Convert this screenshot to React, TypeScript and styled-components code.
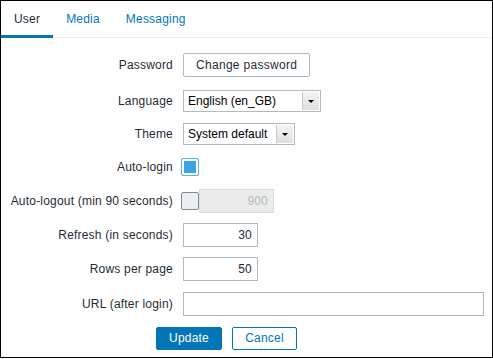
import React from "react";
import styled, { createGlobalStyle } from "styled-components";

const Global = createGlobalStyle`
  html, body { margin: 0; padding: 0; background: #fff; }
  body { font-family: "Liberation Sans", Arial, sans-serif; font-size: 12px; color: #1f2c33; letter-spacing: 0.2px; }
  * { box-sizing: border-box; }
`;

const Frame = styled.div`
  width: 493px;
  height: 358px;
  border: 1px solid #000;
  background: #fff;
  display: flex;
  flex-direction: column;
`;

const TabList = styled.div`
  display: flex;
  height: 37px;
  border-bottom: 1px solid #ebeef0;
`;

const Tab = styled.div<{ $active?: boolean }>`
  height: 37px;
  margin-bottom: -1px;
  padding: 1px 13px 0;
  display: flex;
  align-items: center;
  border-bottom: 3px solid ${(p) => (p.$active ? "#0275b8" : "transparent")};
  color: ${(p) => (p.$active ? "#1f2c33" : "#0275b8")};
  font-size: 12px;
`;

const Form = styled.div`
  display: grid;
  grid-template-columns: 172px 1fr;
  column-gap: 10px;
  padding-top: 7px;
`;

const Label = styled.div<{ $h: number }>`
  height: ${(p) => p.$h}px;
  display: flex;
  align-items: center;
  justify-content: flex-end;
  white-space: nowrap;
`;

const Field = styled.div<{ $h: number }>`
  height: ${(p) => p.$h}px;
  display: flex;
  align-items: center;
`;

const PlainButton = styled.div`
  height: 24px;
  padding: 0 12px;
  border: 1px solid #acbbc2;
  border-radius: 2px;
  display: flex;
  align-items: center;
  background: #fff;
  color: #1f2c33;
  letter-spacing: 0.3px;
`;

const Select = styled.div<{ $w: number }>`
  width: ${(p) => p.$w}px;
  height: 22px;
  border: 1px solid #acbbc2;
  background: #fff;
  display: flex;
  align-items: stretch;
`;

const SelectText = styled.div`
  flex: 1;
  display: flex;
  align-items: center;
  padding-left: 4px;
  color: #000;
  letter-spacing: 0;
`;

const SelectArrow = styled.div`
  width: 17px;
  margin: 1px;
  background: linear-gradient(#f4f4f4, #dedede);
  border-left: 1px solid #c8c8c8;
  display: flex;
  align-items: center;
  justify-content: center;
  &::after {
    content: "";
    border-left: 3px solid transparent;
    border-right: 3px solid transparent;
    border-top: 3px solid #000;
  }
`;

const Check = styled.div<{ $checked?: boolean }>`
  width: 18px;
  height: 18px;
  margin-left: -2px;
  border-radius: 2px;
  border: 1px solid ${(p) => (p.$checked ? "#5fb0e3" : "#7f8c92")};
  background: ${(p) => (p.$checked ? "#3ba4e6" : "#ebeef0")};
  box-shadow: ${(p) => (p.$checked ? "inset 0 0 0 2px #fff" : "none")};
`;

const TextInput = styled.div<{ $w: number; $disabled?: boolean }>`
  width: ${(p) => p.$w}px;
  height: 24px;
  border: 1px solid ${(p) => (p.$disabled ? "#dcdcdc" : "#acbbc2")};
  background: ${(p) => (p.$disabled ? "#ebebeb" : "#fff")};
  color: ${(p) => (p.$disabled ? "#acbbc2" : "#1f2c33")};
  display: flex;
  align-items: center;
  justify-content: flex-end;
  padding-right: 5px;
`;

const Footer = styled.div`
  grid-column: 1 / span 2;
  display: flex;
  gap: 10px;
  padding-left: 155px;
  height: 34px;
  align-items: center;
`;

const Btn = styled.div<{ $primary?: boolean }>`
  height: 23px;
  width: ${(p) => (p.$primary ? 66 : 65)}px;
  border-radius: 2px;
  border: 1px solid #0275b8;
  background: ${(p) => (p.$primary ? "#0275b8" : "#fff")};
  color: ${(p) => (p.$primary ? "#fff" : "#0275b8")};
  display: flex;
  align-items: center;
  justify-content: center;
`;

const rows: { label: string; h: number; field: React.ReactNode }[] = [
  { label: "Password", h: 39, field: <PlainButton>Change password</PlainButton> },
  {
    label: "Language",
    h: 34,
    field: (
      <Select $w={138}>
        <SelectText>English (en_GB)</SelectText>
        <SelectArrow />
      </Select>
    ),
  },
  {
    label: "Theme",
    h: 32,
    field: (
      <Select $w={112}>
        <SelectText>System default</SelectText>
        <SelectArrow />
      </Select>
    ),
  },
  { label: "Auto-login", h: 34, field: <Check $checked /> },
  {
    label: "Auto-logout (min 90 seconds)",
    h: 34,
    field: (
      <>
        <Check />
        <TextInput $w={75} $disabled>900</TextInput>
      </>
    ),
  },
  { label: "Refresh (in seconds)", h: 34, field: <TextInput $w={75}>30</TextInput> },
  { label: "Rows per page", h: 34, field: <TextInput $w={75}>50</TextInput> },
  { label: "URL (after login)", h: 35, field: <TextInput $w={301} /> },
];

export default function App() {
  return (
    <>
      <Global />
      <Frame>
        <TabList>
          <Tab $active>User</Tab>
          <Tab>Media</Tab>
          <Tab>Messaging</Tab>
        </TabList>
        <Form>
          {rows.map((r) => (
            <React.Fragment key={r.label}>
              <Label $h={r.h}>{r.label}</Label>
              <Field $h={r.h}>{r.field}</Field>
            </React.Fragment>
          ))}
          <Footer>
            <Btn $primary>Update</Btn>
            <Btn>Cancel</Btn>
          </Footer>
        </Form>
      </Frame>
    </>
  );
}
